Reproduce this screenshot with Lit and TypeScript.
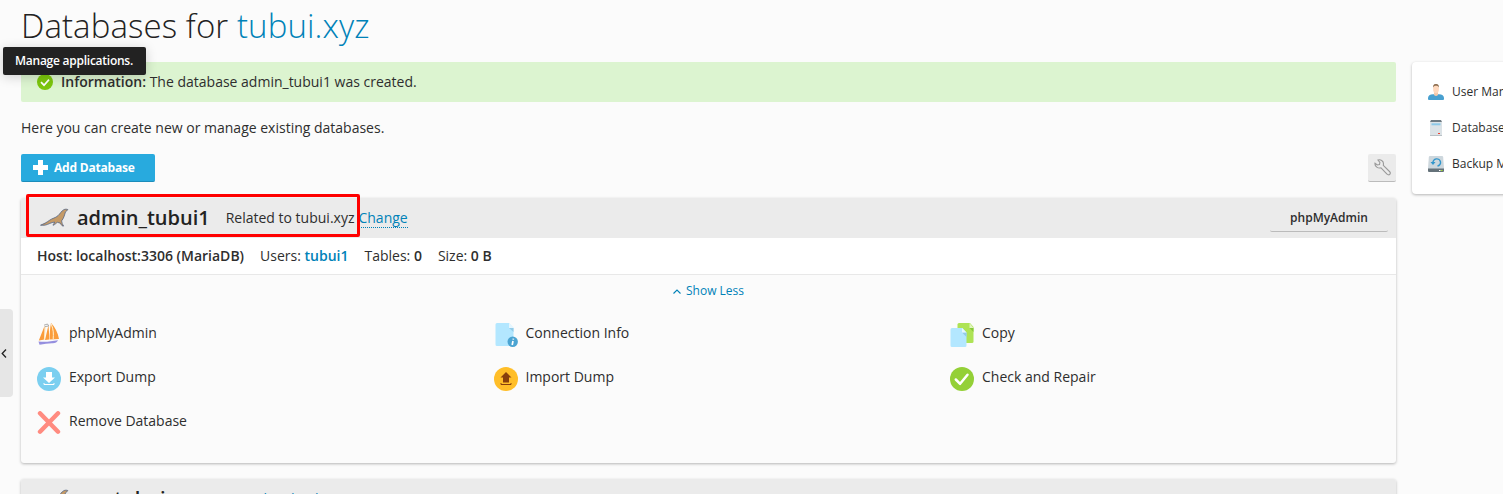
import { LitElement, html, svg, css } from 'lit';
import { customElement } from 'lit/decorators.js';

const seal = html`<svg class="seal" viewBox="0 0 30 20" width="30" height="20">
  <path d="M1.500 17.200C5 15.800 7.500 14.500 10.500 12.300c3-2.200 5.800-2.200 8.500-4.600 2.300-2.100 3.300-4.700 5.800-6 1.400-.7 2.800-.6 4-.2-.3 1.100-1.500 1.600-2.300 2.300-.9 3-1.600 6.300-3.900 9.100.2 2.200.9 3.600 2 5.200-1.300.1-2.300-1-3.300-2.900l-2.900-.9c-1.300.8-2.300 2.300-4.300 3-.2-1 1.400-1.800 1.600-3.200-3.500.2-6.400 2.400-9.400 3-1.600.3-3.300.2-4.800.1z" fill="#c59a66" stroke="#4b5f82" stroke-width=".75"/></svg>`;

const icons: Record<string, unknown> = {
  pma: svg`<path d="M7.500 3 1.800 17.500l6-1zM11.500 2 8 17l4.500-.5zM14 0c-1 5-1.500 11-1 16.500l9-.5C21 10 18 4 14 0z" fill="#fa9c3a"/><path d="M8.600 3 7.300 17M14.200 1c2.500 6 2.300 10 2 15" fill="none" stroke="#fff0cf" stroke-width="1"/><path d="M7 2.200l3.500-1.200 1.200 2-4 .7" fill="none" stroke="#999" stroke-width=".8"/><path d="M1.500 18.500c7 1 13-.3 19.500-1.300-1 2-3 3.300-6 3-4 .2-8 .8-12.500 1.500z" fill="#958fdf"/>`,
  info: svg`<path d="M3 0h12l4.500 5v18H3a1.500 1.500 0 0 1-1.500-1.500v-20A1.500 1.500 0 0 1 3 0z" fill="#b3e7ff"/><path d="M15 5h4.500v4z" fill="#93cbe8"/><path d="M15 0v5h5z" fill="#e4f6ff"/><circle cx="18.700" cy="18.800" r="5.200" fill="#4ba4d2"/><path d="M19.400 15.600l-.2 1M19 18l-.8 4" stroke="#fff" stroke-width="1.700"/>`,
  copy: svg`<path d="M9 0h11l3.500 4v14.500a1.500 1.500 0 0 1-1.500 1.500H9a1.500 1.500 0 0 1-1.500-1.500v-17A1.500 1.500 0 0 1 9 0z" fill="#aee355"/><path d="M19.500 5h4v4z" fill="#86c839"/><path d="M19.500 0v5h4z" fill="#dff5bd"/><path d="M2 5h10.500l4 4.500V22.500a1.500 1.500 0 0 1-1.500 1.500H2a1.500 1.500 0 0 1-1.500-1.500v-16A1.500 1.500 0 0 1 2 5z" fill="#b3e7ff"/><path d="M12 9.500h4.500V14z" fill="#93cbe8"/><path d="M12 5v4.500h4.500z" fill="#e8f8ff"/>`,
  exp: svg`<circle cx="12" cy="12" r="12" fill="#7bcff0"/><path d="M9 5h6v5.500h3L12 16l-6-5.500h3z" fill="#fff"/><path d="M7 16v1.500h10V16" fill="none" stroke="#fff" stroke-width="1"/>`,
  imp: svg`<circle cx="12" cy="12" r="12" fill="#ffbe28"/><path d="M12 5l5.500 5.500H15V15.500H9v-5H6.500z" fill="#873f0c"/><path d="M7 16v1.500h10V16" fill="none" stroke="#873f0c" stroke-width="1"/>`,
  check: svg`<circle cx="12" cy="12" r="12" fill="#94d037"/><path d="M5.800 12.500l4.300 4.300 7.400-9" fill="none" stroke="#fff" stroke-width="2.500" stroke-linecap="round" stroke-linejoin="round"/>`,
  remove: svg`<path d="M3 2.300l18 18.400M21 2.300L3 20.700" stroke="#ff8b80" stroke-width="4.400" stroke-linecap="round"/>`,
};
const side: Record<string, unknown> = {
  user: svg`<path d="M0 15v-1c0-2.500 2-3.500 5-3.800h6c3 .3 5 1.300 5 3.800v1q0 1-1 1H1q-1 0-1-1z" fill="#48a0d0"/><path d="M6 8h4v3q-2 2-4 0z" fill="#f3c9ac"/><ellipse cx="8" cy="4.700" rx="2.900" ry="4.500" fill="#ffd9be"/><path d="M5 3.500C5 .5 6.500 0 8 0s3 .5 3 3.500C10 2 9 1.800 8 1.800S6 2 5 3.500z" fill="#8d6e50"/>`,
  db: svg`<path d="M3 0h10l1 2H2z" fill="#6e7b83"/><path d="M2 2h12v14H2z" fill="#dce3e7"/><path d="M3.500 3.300h9v2h-9z" fill="#8dc9e8"/><path d="M2 15.300h12v.7H2z" fill="#a9b2b8"/><path d="M10 13h2v1h-2z" fill="#ef4030"/>`,
  backup: svg`<path d="M2 0h12q1 0 1.200 1L16 13H0L.8 1Q1 0 2 0z" fill="#cdd7dd"/><path d="M0 12.500h16V15q0 1-1 1H1q-1 0-1-1z" fill="#65727a"/><path d="M11 14h1.500v1H11z" fill="#fff"/><path d="M13 14h1.500v1H13z" fill="#a4e132"/><path d="M5 7a3.800 3.600 0 1 1 4.500 3" fill="none" stroke="#3296cb" stroke-width="1.400"/><path d="M2.500 6h5L5 9z" fill="#3296cb"/>`,
};

const tools: [string, string][] = [
  ['pma', 'phpMyAdmin'], ['info', 'Connection Info'], ['copy', 'Copy'],
  ['exp', 'Export Dump'], ['imp', 'Import Dump'], ['check', 'Check and Repair'],
  ['remove', 'Remove Database'],
];
const links: [string, string][] = [['user', 'User Management'], ['db', 'Database Servers'], ['backup', 'Backup Manager']];

@customElement('app-root')
export class AppRoot extends LitElement {
  static styles = css`
    :host { display: block; position: relative; height: 494px; overflow: hidden; background: #fbfbfb; color: #2e2e2e; font: 14px/20px "Open Sans", sans-serif; }
    * { box-sizing: border-box; }
    svg { display: block; flex: none; }
    .page { display: flex; align-items: flex-start; gap: 16px; padding-left: 21px; width: 1700px; }
    main { width: 1375px; flex: none; }
    h1 { margin: 0; padding-top: 5px; height: 62px; font-weight: 330; font-size: 33px; line-height: 42px; letter-spacing: .1px; white-space: nowrap; color: #222; }
    .link { color: #0082b8; }
    .msg { height: 40px; background: #dcf4d0; border-radius: 2px; display: flex; align-items: center; gap: 8px; padding-left: 16px; }
    b { font-weight: 600; }
    .intro { margin: 16px 0; }
    .bar { display: flex; justify-content: space-between; height: 28px; }
    .add { width: 134px; background: #28aade; border-bottom: 1px solid #1c8dbb; border-radius: 2px; color: #fff; font-size: 12px; letter-spacing: -.2px; font-weight: 700; display: flex; align-items: center; gap: 6px; padding-left: 12px; }
    .wrench { width: 28px; height: 28px; background: #ebebeb; border-bottom: 1px solid #bbb; border-radius: 2px; display: grid; place-items: center; }
    .card { margin-top: 16px; border-radius: 3px; box-shadow: 0 1px 3px rgba(0,0,0,.28); background: #fbfbfb; }
    .head { height: 40px; background: #ebebeb; border-radius: 3px 3px 0 0; display: flex; align-items: center; padding: 0 8px 0 18px; }
    .name { font-size: 20px; font-weight: 600; margin: 0 16px 0 8px; color: #222; }
    .change { line-height: 18px; border-bottom: 1px dotted #0082b8; margin-left: 4px; }
    .btn { margin-left: auto; width: 118px; height: 28px; border-bottom: 1px solid #bbb; border-radius: 2px; font-size: 12px; line-height: 27px; font-weight: 600; text-align: center; }
    .facts { background: #fff; height: 37px; border-bottom: 1px solid #e8e8e8; padding: 8px 16px; display: flex; gap: 16px; }
    .less { height: 32px; display: flex; align-items: center; justify-content: center; gap: 5px; font-size: 12px; }
    .tools { display: grid; grid-template-columns: 456.500px 456.500px 1fr; padding: 16px 16px 8px; }
    .tool { display: flex; gap: 8px; height: 44px; }
    aside { margin-top: 62px; width: 230px; height: 132px; border-radius: 4px; background: #fff; box-shadow: 0 1px 3px rgba(0,0,0,.28); padding: 12px 16px; font-size: 12px; }
    .item { height: 36px; display: flex; align-items: center; gap: 8px; }
    .tip { position: absolute; left: 3px; top: 47px; width: 143px; height: 28px; border-radius: 2px; background: #222; color: #fff; font-size: 12px; letter-spacing: -.25px; font-weight: 600; line-height: 28px; padding-left: 12px; box-shadow: 0 2px 12px rgba(0,0,0,.18); }
    .handle { position: absolute; left: 0; top: 309px; width: 13px; height: 88px; border-radius: 0 4px 4px 0; background: #e6e6e6; display: flex; align-items: center; padding-left: 1px; }
    .mark { position: absolute; left: 26px; top: 194px; width: 334px; height: 43px; border: 3px solid #f00; border-radius: 2px; }
  `;
  render() {
    return html`
      <div class="page">
        <main>
          <h1>Databases for <span class="link">tubui.xyz</span></h1>
          <div class="msg"><svg width="16" height="16" viewBox="0 0 16 16"><circle cx="8" cy="8" r="8" fill="#7cc60d"/><path d="M4 8.200l3 3 5-5.600" fill="none" stroke="#fff" stroke-width="1.700"/></svg><span><b>Information:</b> The database admin_tubui1 was created.</span></div>
          <div class="intro">Here you can create new or manage existing databases.</div>
          <div class="bar">
            <div class="add"><svg width="15" height="15" viewBox="0 0 15 15"><path d="M5 0h5v5h5v5h-5v5H5v-5H0V5h5z" fill="#fff"/></svg>Add Database</div>
            <div class="wrench"><svg width="17" height="17" viewBox="0 0 17 17"><path d="M1 4.200 3.300 6l2.200-.4.400-2.300L4 1c2.500-.8 5.500.8 5.500 3.800l-.2 1.500 6.200 6.200c1 1 1 2 .3 2.800s-2 .7-2.800-.3L7 8.800C4.200 9.800.5 7.500 1 4.200z" fill="none" stroke="#999" stroke-width="1.100"/></svg></div>
          </div>
          <section class="card">
            <div class="head">${seal}<span class="name">admin_tubui1</span><span>Related to tubui.xyz</span><span class="link change">Change</span><div class="btn">phpMyAdmin</div></div>
            <div class="facts"><b>Host: localhost:3306 (MariaDB)</b><span>Users: <b class="link">tubui1</b></span><span>Tables: <b>0</b></span><span>Size: <b>0 B</b></span></div>
            <div class="less link"><svg width="8" height="5" viewBox="0 0 8 5"><path d="M.5 4.500 4 1l3.500 3.500" fill="none" stroke="#0082b8" stroke-width="1.100"/></svg>Show Less</div>
            <div class="tools">${tools.map(([i, t]) => html`<div class="tool"><svg width="24" height="24" viewBox="0 0 24 24">${icons[i]}</svg>${t}</div>`)}</div>
          </section>
          <section class="card"><div class="head">${seal}<span class="name">wp_tubuixyz</span><span class="link">Assign this database to a site</span></div></section>
        </main>
        <aside>${links.map(([i, t]) => html`<div class="item"><svg width="16" height="16" viewBox="0 0 16 16">${side[i]}</svg><span>${t}</span></div>`)}</aside>
      </div>
      <div class="mark"></div>
      <div class="tip">Manage applications.</div>
      <div class="handle"><svg width="6" height="9" viewBox="0 0 6 9"><path d="M5 .5 1.200 4.500 5 8.500" fill="none" stroke="#222" stroke-width="1.300"/></svg></div>
    `;
  }
}
